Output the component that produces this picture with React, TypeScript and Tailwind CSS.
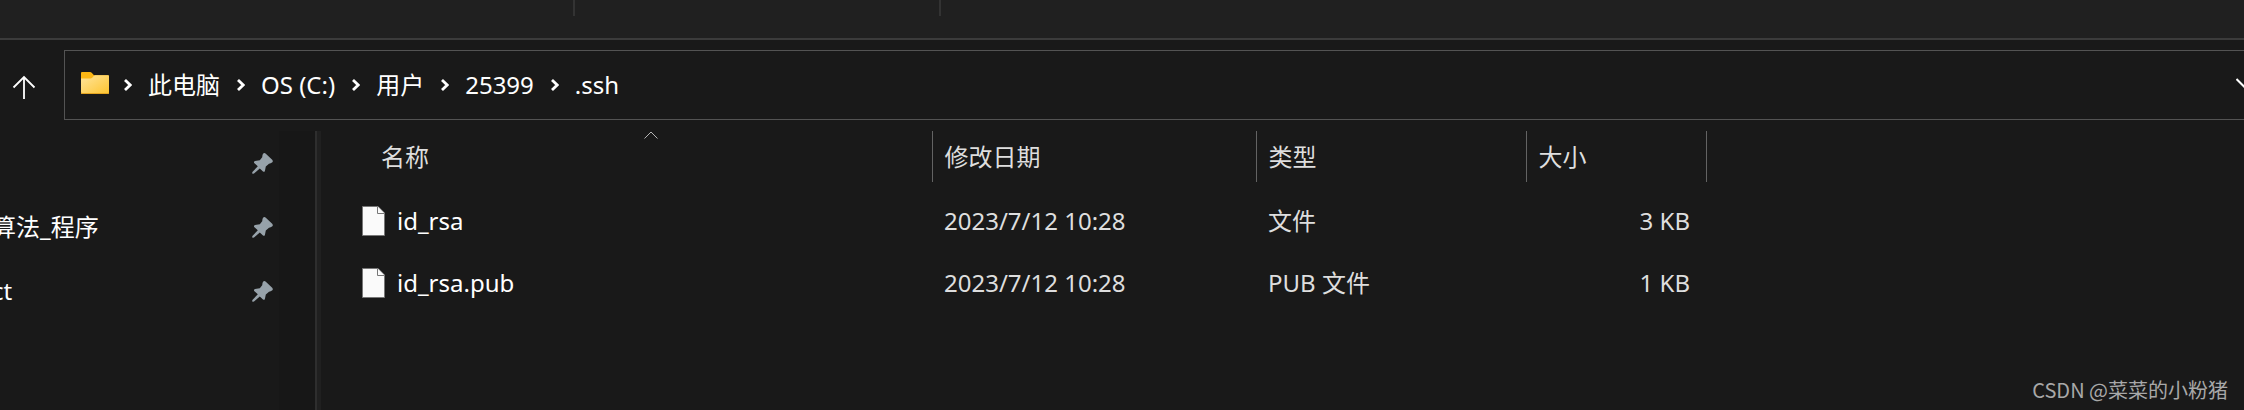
import React from 'react';

interface FileEntry {
  name: string;
  modified: string;
  type: string;
  size: string;
}

const crumbs: string[] = ['此电脑', 'OS (C:)', '用户', '25399', '.ssh'];

const pinned: string[] = ['', '算法_程序', 'ct'];

const files: FileEntry[] = [
  { name: 'id_rsa', modified: '2023/7/12 10:28', type: '文件', size: '3 KB' },
  { name: 'id_rsa.pub', modified: '2023/7/12 10:28', type: 'PUB 文件', size: '1 KB' },
];

const FolderIcon: React.FC = () => (
  <svg className="w-7 h-[22px] mb-1 shrink-0" viewBox="0 0 28 22" aria-hidden="true">
    <defs>
      <linearGradient id="folder" x1="0" y1="0" x2="1" y2="1">
        <stop offset="0" stopColor="#ffe59c" />
        <stop offset="1" stopColor="#fdc42f" />
      </linearGradient>
    </defs>
    <path d="M0 1Q0 0 1 0H9Q10 0 10.7 .8L13 3.2H27Q28 3.2 28 4.2V12H0Z" fill="#fcb714" />
    <path d="M0 6.500H9.5Q10.5 6.5 11.2 5.8L12.8 4Q13.300 3.3 14.2 3.3H27Q28 3.3 28 4.3V21Q28 22 27 22H1Q0 22 0 21Z" fill="url(#folder)" />
    <path d="M0 20.5Q.2 21.5 1 21.5H27Q27.8 21.5 28 20.5" fill="none" stroke="#e5a520" />
  </svg>
);

const CrumbChevron: React.FC = () => (
  <svg className="w-2 h-3 shrink-0" viewBox="0 0 8 12" fill="none" stroke="#fff" strokeWidth="2.8" aria-hidden="true">
    <path d="M1 1L6.2 6L1 11" />
  </svg>
);

const PinIcon: React.FC = () => (
  <svg className="w-[21px] h-[21px] shrink-0" viewBox="0 0 21 21" aria-hidden="true">
    <path
      d="M11.2 .6Q12.5 -.5 13.8 .7L20.2 6.8Q21.5 8.3 20 9.6Q18.8 10.3 17 10.7L13.8 13.5L12.9 18Q12.3 19.4 11 18.5L7.8 15.4L2 20.6Q.8 21 .3 20.4Q0 19.5 .6 18.8L5.8 13.3L2.2 10Q1.5 8.6 3 8L7.8 7.2L10.2 4.2Q10.3 2 11.2 .6Z"
      fill="#97a2aa"
    />
  </svg>
);

const FileIcon: React.FC = () => (
  <svg className="w-[23px] h-[30px] shrink-0" viewBox="0 0 23 30" fill="#fafafa" stroke="#777" aria-hidden="true">
    <path d="M.5 .5H16L22.5 7V29.5H.5Z" />
    <path d="M15.5 .5V7.5H22.5" />
  </svg>
);

const TopBar: React.FC = () => (
  <div className="flex h-10 bg-[#202020] border-b-2 border-[#3b3b3b]">
    <div className="w-[575px] h-4 border-r-2 border-[#333]"></div>
    <div className="w-[366px] h-4 border-r-2 border-[#333]"></div>
  </div>
);

const AddressBar: React.FC = () => (
  <div className="flex items-center pt-[10px] pb-[11px]">
    <button type="button" aria-label="上移" className="w-16 flex pl-3 pt-1 shrink-0">
      <svg className="w-6 h-6" viewBox="0 0 24 24" fill="none" stroke="#fff" strokeWidth="1.8" aria-hidden="true">
        <path d="M12 24V2M1.5 12.500L12 2L22.5 12.500" />
      </svg>
    </button>
    <nav className="flex-1 flex items-center h-[70px] pl-4 border border-r-0 border-[#535353] overflow-hidden">
      <FolderIcon />
      <ol className="flex items-center ml-[15px] text-2xl text-white">
        {crumbs.map((crumb) => (
          <li key={crumb} className="flex items-center">
            <CrumbChevron />
            <a href="#" className="pl-4 pr-[17px] whitespace-nowrap">{crumb}</a>
          </li>
        ))}
      </ol>
      <button type="button" aria-label="历史记录" className="ml-auto -mr-4 shrink-0">
        <svg className="w-6 h-4" viewBox="0 0 24 16" fill="none" stroke="#fff" strokeWidth="2" aria-hidden="true">
          <path d="M.5 2L12 13.5L23.5 2" />
        </svg>
      </button>
    </nav>
  </div>
);

const Sidebar: React.FC = () => (
  <aside className="flex shrink-0">
    <ul className="w-[279px] overflow-hidden text-2xl text-white">
      {pinned.map((label, i) => (
        <li key={i} className="flex items-center justify-between h-16 pr-[6px]">
          <span className="-ml-2">{label}</span>
          <PinIcon />
        </li>
      ))}
    </ul>
    <div className="w-9 bg-[#171717]"></div>
    <div className="w-[6px] bg-[#202020] border-l-2 border-[#2e2e2e]"></div>
  </aside>
);

const FileTable: React.FC = () => (
  <table className="table-fixed w-[1385px] h-min text-2xl text-[#dedede] text-left">
    <colgroup>
      <col className="w-[611px]" />
      <col className="w-[324px]" />
      <col className="w-[270px]" />
      <col className="w-[180px]" />
    </colgroup>
    <thead>
      <tr>
        <th className="relative h-[51px] p-0 pl-[60px] font-normal border-r border-[#636363]">
          名称
          <svg className="absolute top-0 left-[323px] w-[14px] h-2" viewBox="0 0 14 8" fill="none" stroke="#b5b5b5" aria-hidden="true">
            <path d="M.5 7.5L7 1L13.5 7.5" />
          </svg>
        </th>
        <th className="p-0 pl-3 font-normal border-r border-[#636363]">修改日期</th>
        <th className="p-0 pl-3 font-normal border-r border-[#636363]">类型</th>
        <th className="p-0 pl-3 font-normal border-r border-[#636363]">大小</th>
      </tr>
    </thead>
    <tbody>
      <tr className="h-2"></tr>
      {files.map((file) => (
        <tr key={file.name} className="h-[62px]">
          <td className="p-0 pl-[41px] text-white">
            <div className="flex items-center gap-3">
              <FileIcon />
              <span>{file.name}</span>
            </div>
          </td>
          <td className="p-0 pl-3">{file.modified}</td>
          <td className="p-0 pl-3">{file.type}</td>
          <td className="p-0 pr-4 text-right">{file.size}</td>
        </tr>
      ))}
    </tbody>
  </table>
);

const App: React.FC = () => {
  return (
    <div className="relative flex flex-col min-h-screen overflow-hidden bg-[#191919] font-['Noto_Sans','Noto_Sans_CJK_SC',sans-serif]">
      <TopBar />
      <AddressBar />
      <main className="flex flex-1">
        <Sidebar />
        <FileTable />
      </main>
      <div className="absolute right-4 bottom-[6px] text-xl text-[#a8a8a8] font-['Noto_Sans_CJK_SC',sans-serif]">
        CSDN @菜菜的小粉猪
      </div>
    </div>
  );
};

export default App;
